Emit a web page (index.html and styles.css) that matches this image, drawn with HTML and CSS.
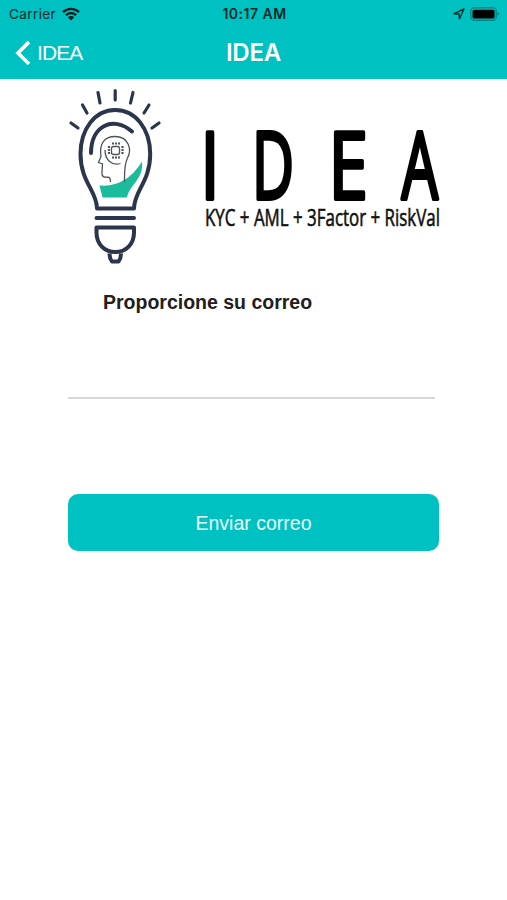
FILE: index.html
```
<!DOCTYPE html>
<html lang="es">
<head>
	<meta charset="utf-8">
	<meta name="viewport" content="width=device-width,initial-scale=1.0">
	<title>IDEA</title>
	<link rel="stylesheet" href="styles.css">
</head>
<body>

	<!-- STATUS BAR + NAVIGATION -->
	<header class="top">
		<section class="status-bar">
			<section class="carrier">
				<span>Carrier</span>
				<svg class="wifi" viewBox="0 0 18 14">
					<path d="M1 5.2a11.5 11.5 0 0 1 16 0M3.9 8.2a7.4 7.4 0 0 1 10.2 0"/>
					<path class="solid" d="M9 13.5L5.8 10.3a4.6 4.6 0 0 1 6.4 0z"/>
				</svg>
			</section>
			<span class="time">10:17 AM</span>
			<section class="indicators">
				<svg class="location" viewBox="0 0 12 12"><path d="M1 5.7L11 1L6.5 10.8L6 6z"/></svg>
				<svg class="battery" viewBox="0 0 30 14">
					<rect class="shell" x=".8" y=".8" width="25.4" height="12.4" rx="3.5"/>
					<rect x="2.5" y="2.7" width="22" height="8.8" rx="1.5"/>
					<path class="tip" d="M27.5 4.8q3 2.2 0 4.4z"/>
				</svg>
			</section>
		</section>
		<nav class="nav-bar">
			<a class="back">
				<svg viewBox="0 0 16 26"><path d="M14 2L3 13L14 24"/></svg>
				<span>IDEA</span>
			</a>
			<h1>IDEA</h1>
		</nav>
	</header>

	<main>
		<!-- LOGO -->
		<svg class="logo" viewBox="60 80 390 190">
			<g class="bulb">
				<path class="rays" d="M71 123l7 5M82.500 105l4.500 8M98 92.500l2 10.500M115.200 90.500v9.500M133 92.500l-2.500 10.500M149 105l-5 8M159 123l-7 5"/>
				<path d="M97 208.500C97 191 80.500 182 80.500 154C80.500 129 95 110 115.200 110C135.500 110 150.200 129 150.200 154C150.200 182 134 191 134 208.500z"/>
				<path class="round" d="M91 153C91 126 113 115 132 131.500M96.500 218h37.500"/>
				<path d="M96.500 227.500h37.500v5C134 244 126 252 115.200 252C104.500 252 96.500 244 96.500 232.500z"/>
				<path d="M109.500 253.500q0 5 2.500 8h6.500q2.500-3 2.500-8"/>
			</g>
			<path class="leaf" d="M99.500 185.500C120 187 133 176 142 161.500C144 179 130 184 127 197.500h-24.500z"/>
			<g class="head">
				<path d="M110.500 182c0-5-1-5-6-5q-3-.5-2.500-5l.5-8l-4-1.500l2.500-6C99 144 104 136.500 115 136.500C129 136.500 132 150 127.500 158C124 165 124.500 173 124.500 182"/>
				<path d="M105 150C105 160 112 166 120.500 163.500"/>
				<rect x="111.500" y="146.500" width="8" height="8" rx="2"/>
				<path class="chip" d="M112 143.500h8M112 157.500h8M109 146v9M122.500 146v9"/>
			</g>
			<g class="wordmark">
				<text transform="translate(200.500 198.500) scale(.73 1)">I</text>
				<text transform="translate(252 198.500) scale(.62 1)">D</text>
				<text transform="translate(328.500 198.500) scale(.76 1)">E</text>
				<text transform="translate(401.500 198.500) scale(.62 1)">A</text>
			</g>
			<text class="tagline" x="205" y="225.500" textLength="235" lengthAdjust="spacingAndGlyphs">KYC + AML + 3Factor + RiskVal</text>
		</svg>

		<!-- EMAIL FORM -->
		<form class="email-form">
			<label for="correo">Proporcione su correo</label>
			<input id="correo" type="email">
			<button type="button">Enviar correo</button>
		</form>
	</main>

</body>
</html>
```
FILE: styles.css
```
body {
	margin:0;
	background:#fff;
	font-family:"Liberation Sans", Arial, sans-serif;
}

header, section, nav, main, form, input, button {
	box-sizing:border-box;
}

svg {
	display:block;
	fill:none;
}

.top {
	height:79px;
	background:#00c1c1;
}

.status-bar {
	display:grid;
	grid-template-columns:1fr auto 1fr;
	align-items:center;
	height:27px;
	padding:0 7px 0 9px;
	font-family:Inter, sans-serif;
	font-size:13.5px;
	color:#062b2b;
}

.carrier, .indicators {
	display:flex;
	align-items:center;
}

.carrier {
	gap:6px;
	letter-spacing:.4px;
}

.wifi {
	width:18px;
	height:14px;
	stroke:#001c1c;
	stroke-width:2.3;
}

.wifi .solid {
	fill:#001c1c;
	stroke:none;
}

.time {
	font-weight:600;
	font-size:14px;
	letter-spacing:.5px;
}

.indicators {
	justify-content:flex-end;
	gap:5px;
}

.location {
	width:12px;
	height:12px;
	stroke:#052f2f;
	stroke-width:1.4;
	stroke-linejoin:round;
}

.battery {
	width:30px;
	height:14px;
	fill:#000;
}

.battery .shell {
	fill:none;
	stroke:#078484;
	stroke-width:1.4;
}

.battery .tip {
	fill:#078484;
}

.nav-bar {
	display:grid;
	grid-template-columns:1fr auto 1fr;
	align-items:center;
	height:51px;
	padding:0 15px;
	color:#fff;
}

.back {
	display:flex;
	align-items:center;
	gap:6px;
	font-size:21px;
	letter-spacing:-.9px;
}

.back svg {
	width:16px;
	height:26px;
	stroke:#fff;
	stroke-width:3.7;
}

.nav-bar h1 {
	margin:0;
	font-family:Inter, sans-serif;
	font-size:24px;
	font-weight:600;
	letter-spacing:-.2px;
}

.logo {
	width:390px;
	height:190px;
	margin:1px 0 0 60px;
	overflow:visible;
}

.bulb {
	stroke:#2b354c;
	stroke-width:4;
	stroke-linejoin:round;
}

.rays, .round {
	stroke-linecap:round;
}

.rays {
	stroke-width:3.2;
}

.leaf {
	fill:#1bbc9b;
}

.head {
	stroke:#4d535b;
	stroke-width:1.3;
}

.chip {
	stroke-width:2.2;
	stroke-dasharray:2 1;
}

.wordmark {
	fill:#000;
	stroke:#000;
	stroke-width:4;
	stroke-linejoin:round;
	font-family:"Open Sans", sans-serif;
	font-size:93.5px;
}

.tagline {
	fill:#111;
	stroke:#111;
	stroke-width:.6;
	font-family:"Open Sans", sans-serif;
	font-size:23px;
}

.email-form {
	display:flex;
	flex-direction:column;
	width:371px;
	margin:20px 0 0 68px;
}

.email-form label {
	padding-left:35px;
	font-size:19.5px;
	font-weight:bold;
	line-height:24px;
	color:#202020;
}

.email-form input {
	width:367px;
	height:40px;
	margin-top:45px;
	padding:0;
	border:0;
	border-bottom:2px solid #d8d8d8;
	outline:none;
	font-size:20px;
}

.email-form button {
	height:57px;
	margin-top:95px;
	padding:2px 0 0;
	border:0;
	border-radius:10px;
	background:#00c1c1;
	font-family:inherit;
	font-size:19.5px;
	color:#e9ffff;
}
```
